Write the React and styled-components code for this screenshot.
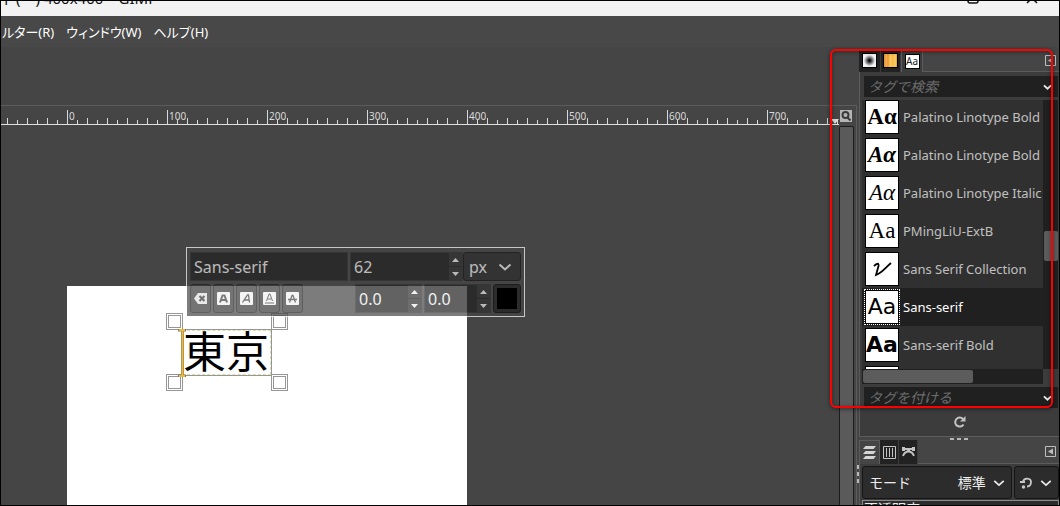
import React from 'react';
import styled, { createGlobalStyle, css } from 'styled-components';

const Global = createGlobalStyle`
  *, *::before, *::after { box-sizing: border-box; }
  body { margin: 0; background: #454545; }
  button, input, select {
    font: inherit; color: inherit; margin: 0; padding: 0; border: 0;
    background: none; border-radius: 0; appearance: none; outline: none; min-width: 0;
  }
  button { display: flex; align-items: center; justify-content: center; }
  svg { display: block; flex: none; }
`;

const Window = styled.div`
  position: relative;
  display: flex;
  flex-direction: column;
  height: 100vh;
  overflow: hidden;
  border: 1px solid #000;
  background: #454545;
  color: #bebebe;
  font: 14px/20px "Noto Sans", "Noto Sans CJK JP", sans-serif;
`;

const TitleBar = styled.header`
  display: flex;
  justify-content: space-between;
  align-items: flex-end;
  height: 15px;
  padding: 0 21px 8px 0;
  overflow: hidden;
  flex: none;
  background: #f3f2f3;
  color: #111;
  font-size: 15px;
`;
const TitleText = styled.span`white-space: pre;`;
const TitleButtons = styled.div`display: flex; gap: 47px; padding-bottom: 4px;`;

const MenuBar = styled.nav`
  display: flex;
  align-items: center;
  gap: 12px;
  height: 31px;
  padding-left: 1px;
  flex: none;
  background: #484848;
  color: #fff;
`;
const MenuItem = styled.button`
  white-space: nowrap;
  font-size: 13px;
  font-feature-settings: "palt";
`;

const Main = styled.main`
  display: flex;
  flex: 1;
  min-height: 0;
`;

const Editor = styled.section`
  display: flex;
  flex-direction: column;
  flex: 1;
  min-width: 0;
  padding-top: 58px;
`;
const EditorFrame = styled.div`
  display: grid;
  grid-template-columns: minmax(0, 1fr) 15px;
  grid-template-rows: 19px minmax(0, 1fr);
  flex: 1;
  min-height: 0;
  padding-right: 2px;
  border-top: 1px solid #5c5c5c;
  border-right: 1px solid #5c5c5c;
`;

const Ruler = styled.div`
  position: relative;
  display: flex;
  padding-left: 68px;
  overflow: hidden;
  border-bottom: 1px solid #e0e0e0;
  background:
    repeating-linear-gradient(90deg, transparent 0 66px, #d8d8d8 66px 67px, transparent 67px 100px) 0 100% / 100% 14px no-repeat,
    repeating-linear-gradient(90deg, transparent 0 6px, #d8d8d8 6px 7px, transparent 7px 20px) 0 100% / 100% 6px no-repeat,
    repeating-linear-gradient(90deg, transparent 0 6px, #d8d8d8 6px 7px, transparent 7px 10px) 0 100% / 100% 4px no-repeat;
`;
const RulerLabel = styled.span`
  width: 100px;
  flex: none;
  font-size: 10px;
  line-height: 20px;
  color: #dadada;
`;
const RulerMarker = styled.svg`
  position: absolute;
  right: 0;
  bottom: 0;
`;
const ZoomButton = styled.button`
  width: 12px;
  height: 12px;
  margin: 4px 0 0 1px;
  background: #b5b5b5;
`;
const VScroll = styled.div`
  margin-top: 1px;
  border: 1px solid #1c1c1c;
  border-bottom: 0;
  border-radius: 2px 2px 0 0;
  background: #5a5a5a;
`;

const Canvas = styled.div`
  position: relative;
  overflow: hidden;
  background: #454545;
`;
const Page = styled.div`
  position: absolute;
  left: 66px;
  top: 161px;
  width: 400px;
  height: 400px;
  background: #fff;
`;
const TextLayer = styled.div`
  position: absolute;
  left: 180px;
  top: 204px;
  width: 91px;
  height: 47px;
  padding-left: 1px;
  border: 1px solid #969696;
  color: #000;
  font: 43px/38px "Noto Sans CJK JP", sans-serif;
  white-space: nowrap;
  &::before {
    content: '';
    position: absolute;
    inset: 0;
    border: 1px dashed #dcdca8;
  }
`;
const Caret = styled.svg`
  position: absolute;
  left: -4px;
  top: -1px;
`;
const Handle = styled.i`
  position: absolute;
  width: 17px;
  height: 17px;
  border: 1px solid #969696;
  background: #fff;
  &::after {
    content: '';
    position: absolute;
    inset: 1px;
    border: 1px solid #969696;
  }
  ${p => (p.$x === 'l' ? 'left: -16px;' : 'right: -17px;')}
  ${p => (p.$y === 't' ? 'top: -17px;' : 'bottom: -16px;')}
`;

const PopupLayer = styled.form`
  position: absolute;
  left: 185px;
  top: 122px;
  display: grid;
  width: 339px;
  & > * { grid-area: 1 / 1; }
`;
const TextPopup = styled.div`
  display: flex;
  flex-direction: column;
  gap: 3px;
  padding: 4px 3px 3px;
  border: 1px solid #fff;
  background: #454545;
  opacity: 0.7;
  color: #ececec;
  font-size: 16px;
`;
const PopupRow = styled.div`
  display: flex;
  gap: 2px;
  height: 29px;
`;
const Entry = styled.input`
  width: 158px;
  flex: none;
  padding: 0 3px;
  border: 1px solid #303030;
  background: #212121;
`;
const Spin = styled.div`
  display: flex;
  width: ${p => p.$w}px;
  flex: none;
  border: 1px solid #303030;
  background: #212121;
  & > input { flex: 1; width: 0; padding: 0 3px; }
`;
const Steps = styled.div`
  display: grid;
  grid-template-rows: 1fr 1fr;
  gap: 1px;
  width: 13px;
  button { background: #303030; }
`;
const SizeGroup = styled.div`display: flex; flex: 1;`;
const FormatButtons = styled.div`
  display: flex;
  gap: 2px;
  margin-right: 50px;
`;
const SquareButton = styled.button`
  width: 21px;
  height: 29px;
  border: 1px solid #1c1c1c;
  border-radius: 3px;
  background: #3a3a3a;
`;
const ColorButton = styled.button`
  z-index: 1;
  place-self: end;
  width: 28px;
  height: 29px;
  margin: 0 4px 4px 0;
  border: 1px solid #1c1c1c;
  border-radius: 3px;
  background: #2c2c2c;
  i { width: 20px; height: 21px; background: #000; }
`;
const SelectBox = styled.label`
  display: flex;
  align-items: center;
  justify-content: space-between;
  flex: ${p => p.$grow || 'none'};
  width: ${p => (p.$w ? p.$w + 'px' : 'auto')};
  min-width: 0;
  padding: ${p => p.$pad || '0 8px 0 5px'};
  border: 1px solid #151515;
  border-radius: 3px;
  background: #2c2c2c;
  select { flex: 1; text-align-last: ${p => p.$align || 'left'}; }
`;

const Dock = styled.aside`
  display: flex;
  flex-direction: column;
  width: 202px;
  flex: none;
  padding: 2px 0 0 2px;
`;
const Tabs = styled.div`
  display: flex;
  height: ${p => p.$h}px;
  flex: none;
  margin-bottom: -1px;
`;
const Tab = styled.button`
  position: relative;
  width: ${p => p.$w || 20}px;
  height: 100%;
  border-right: 1px solid #3c3c3c;
  background: #222;
  ${p => p.$on && css`
    border: 1px solid #5c5c5c;
    border-bottom: 0;
    background: ${p.$bg || '#3c3c3c'};
  `}
`;
const TabMenu = styled.button`
  width: 11px;
  height: 11px;
  margin: 6px 3px 0 auto;
`;
const Swatch = styled.i`
  display: block;
  width: 15px;
  height: 15px;
  border: 1px solid #000;
  ${p => p.$kind === 'brush' && 'background: radial-gradient(circle, #000 0 5%, #555 25%, #f4f4f4 62%);'}
  ${p => p.$kind === 'wood' && 'background: linear-gradient(90deg, #e0903a, #f6b04a 20%, #e8943a 30%, #ffcc60 48%, #f8b848 70%, #ffd068 85%, #e89c40);'}
  ${p => p.$kind === 'font' && 'background: #fff; color: #222; font: 10px/13px "Noto Sans", sans-serif; text-align: center;'}
`;
const FontPanel = styled.div`
  display: flex;
  flex-direction: column;
  flex: none;
  height: 366px;
  padding: 4px 1px 0 2px;
  border: 1px solid #5c5c5c;
  border-right: 0;
  background: #3c3c3c;
`;
const TagBox = styled.label`
  display: flex;
  align-items: center;
  flex: none;
  height: 21px;
  margin-left: 2px;
  padding: 0 6px 0 4px;
  background: #202020;
  color: #e8e8e8;
  input {
    flex: 1;
    font-size: 14px;
    font-style: italic;
    &::placeholder { color: #6c6c6c; opacity: 1; }
  }
`;
const ListArea = styled.div`
  display: flex;
  height: 269px;
  flex: none;
  margin-top: 3px;
  background: #202020;
`;
const FontList = styled.ul`
  flex: 1;
  min-width: 0;
  margin: 0;
  padding: 0;
  overflow: hidden;
  list-style: none;
  background: #303030;
`;
const FontRow = styled.li`
  display: flex;
  align-items: center;
  gap: 4px;
  height: 38px;
  padding-left: 3px;
  white-space: nowrap;
  font-size: 13px;
  color: #c0c0c0;
  &:first-child { margin-top: -2px; }
  ${p => p.$on && 'background: #202020; color: #fff;'}
`;
const Preview = styled.span`
  display: flex;
  align-items: center;
  justify-content: center;
  width: 34px;
  height: 34px;
  flex: none;
  overflow: hidden;
  border: 1px solid #000;
  background: #fff;
  color: #000;
  font-family: ${p => p.$font};
  font-size: ${p => p.$size || 23}px;
  font-weight: ${p => p.$weight || 400};
  font-style: ${p => p.$style || 'normal'};
  outline: ${p => (p.$on ? '1px dotted #fff' : '0')};
`;
const ScrollTrackV = styled.div`
  width: 15px;
  flex: none;
  padding: 131px 0 0 1px;
  i { display: block; height: 30px; border-radius: 2px; background: #5c5c5c; }
`;
const ScrollTrackH = styled.div`
  height: 15px;
  flex: none;
  margin: 0 15px 3px 0;
  padding: 1px 70px 1px 1px;
  background: #202020;
  i { display: block; height: 13px; border-radius: 2px; background: #5c5c5c; }
`;
const Refresh = styled.button`
  flex: 1;
  width: 100%;
`;
const Grip = styled.div`
  display: flex;
  justify-content: center;
  align-items: center;
  gap: 3px;
  flex: none;
  height: 3px;
  i { width: 4px; height: 2px; background: #b8b8b8; }
`;
const SideGrip = styled.div`
  position: absolute;
  right: 200px;
  top: 464px;
  display: grid;
  gap: 3px;
  i { width: 2px; height: 4px; background: #b8b8b8; }
`;
const LayerPanel = styled.div`
  flex: 1;
  min-height: 0;
  padding: 2px 0 0 2px;
  border: 1px solid #5c5c5c;
  border-right: 0;
  background: #3c3c3c;
  color: #ececec;
`;
const ModeRow = styled.div`
  display: flex;
  gap: 2px;
  height: 33px;
`;
const Opacity = styled.label`
  display: flex;
  height: 24px;
  margin-top: 1px;
  padding-left: 1px;
  border: 1px solid #8a8a8a;
  background: #2c2c2c;
  line-height: 16px;
`;
const Callout = styled.div`
  position: absolute;
  top: 48px;
  right: 6px;
  width: 223px;
  height: 359px;
  border: 2px solid #f00;
  border-radius: 6px;
  box-shadow: 0 1px 4px rgba(0, 0, 0, 0.5), inset 0 1px 4px rgba(0, 0, 0, 0.4);
  pointer-events: none;
`;

const Chevron = ({ w = 14, h = 8, s = 2 }) => (
  <svg width={w} height={h} viewBox="0 0 14 8" fill="none" stroke="currentColor" strokeWidth={s}>
    <path d="M1.5 1.5 7 6.5l5.5-5" />
  </svg>
);
const Arrow = ({ down }) => (
  <svg width="7" height="4" viewBox="0 0 7 4" fill="currentColor">
    <path d={down ? 'M0 0h7L3.5 4z' : 'M0 4h7L3.5 0z'} />
  </svg>
);
const Stepper = ({ name }) => (
  <Steps>
    <button type="button" aria-label={`${name} +`}><Arrow /></button>
    <button type="button" aria-label={`${name} -`}><Arrow down /></button>
  </Steps>
);
const MenuArrow = () => (
  <TabMenu aria-label="タブメニュー">
    <svg width="11" height="11" viewBox="0 0 11 11">
      <path d="M.5.5h10v10H.5z" fill="none" stroke="#bebebe" />
      <path d="M8 2.5v6L3 5.5z" fill="#bebebe" />
    </svg>
  </TabMenu>
);
const LetterIcon = ({ children }) => (
  <svg width="13" height="13" viewBox="0 0 13 13">
    <rect width="13" height="13" rx="1" fill="#f0f0f0" />
    <g fill="none" stroke="#444">{children}</g>
  </svg>
);

const fonts = [
  { name: 'Palatino Linotype Bold', text: 'Aα', font: '"Liberation Serif", serif', weight: 700 },
  { name: 'Palatino Linotype Bold', text: 'Aα', font: '"Liberation Serif", serif', weight: 700, style: 'italic' },
  { name: 'Palatino Linotype Italic', text: 'Aα', font: '"Liberation Serif", serif', style: 'italic' },
  { name: 'PMingLiU-ExtB', text: 'Aa', font: '"Liberation Serif", serif' },
  { name: 'Sans Serif Collection', draw: true },
  { name: 'Sans-serif', text: 'Aa', font: '"DejaVu Sans", sans-serif', size: 22, on: true },
  { name: 'Sans-serif Bold', text: 'Aa', font: '"DejaVu Sans", sans-serif', weight: 700, size: 22 },
  { name: '', text: '', font: 'sans-serif' },
];

export default function App() {
  return (
    <Window>
      <Global />
      <TitleBar>
        <TitleText>ド(ー) 400x400 – GIMP</TitleText>
        <TitleButtons>
          <svg width="12" height="12" viewBox="0 0 12 12" fill="none" stroke="#111" strokeWidth="1.5"><rect x="1" y="1" width="10" height="10" rx="2" /></svg>
          <svg width="12" height="12" viewBox="0 0 12 12" stroke="#111" strokeWidth="1.5"><path d="m1 1 10 10M11 1 1 11" /></svg>
        </TitleButtons>
      </TitleBar>
      <MenuBar>
        <MenuItem>ルター(R)</MenuItem>
        <MenuItem>ウィンドウ(W)</MenuItem>
        <MenuItem>ヘルプ(H)</MenuItem>
      </MenuBar>
      <Main>
        <Editor>
          <EditorFrame>
            <Ruler>
              {[0, 100, 200, 300, 400, 500, 600, 700].map(n => <RulerLabel key={n}>{n}</RulerLabel>)}
              <RulerMarker width="8" height="5" viewBox="0 0 8 5"><path d="M0 0h8L4 5z" fill="#d8d8d8" /></RulerMarker>
            </Ruler>
            <ZoomButton aria-label="ズーム">
              <svg width="12" height="12" viewBox="0 0 12 12" fill="none" stroke="#3c3c3c" strokeWidth="2"><circle cx="5.5" cy="5" r="3" /><path d="m7.5 7.5 3 3" /></svg>
            </ZoomButton>
            <Canvas>
              <Page />
              <TextLayer>
                東京
                <Handle $x="l" $y="t" /><Handle $x="r" $y="t" />
                <Handle $x="l" $y="b" /><Handle $x="r" $y="b" />
                <Caret width="8" height="48" viewBox="0 0 8 48" fill="none">
                  <path d="M0 1h8M0 47h8M4.5 1v46" stroke="#777" strokeWidth="3" />
                  <path d="M1 1h6M1 47h6M4.5 1v46" stroke="#f0b830" strokeWidth="2" />
                </Caret>
              </TextLayer>
              <PopupLayer>
                <TextPopup>
                  <PopupRow>
                    <Entry aria-label="フォント" defaultValue="Sans-serif" />
                    <SizeGroup>
                      <Spin $w={113}>
                        <input aria-label="サイズ" defaultValue="62" />
                        <Stepper name="サイズ" />
                      </Spin>
                      <SelectBox $grow="1">
                        <select aria-label="単位"><option>px</option></select>
                        <Chevron />
                      </SelectBox>
                    </SizeGroup>
                  </PopupRow>
                  <PopupRow>
                    <FormatButtons>
                      <SquareButton type="button" aria-label="消去">
                        <svg width="13" height="11" viewBox="0 0 13 11"><path d="M4 0h9v11H4L0 5.5z" fill="#e0e0e0" /><path d="m5.5 3 5 5m0-5-5 5" stroke="#333" strokeWidth="2" /></svg>
                      </SquareButton>
                      <SquareButton type="button" aria-label="太字"><LetterIcon><path d="m3 10.5 2.5-7h2l2.5 7M4 8h5" strokeWidth="2" /></LetterIcon></SquareButton>
                      <SquareButton type="button" aria-label="斜体"><LetterIcon><path d="M2.5 10.5 7.5 3h1l1 7.5M4.5 8h4.5" strokeWidth="1.3" /></LetterIcon></SquareButton>
                      <SquareButton type="button" aria-label="下線"><LetterIcon><path d="m3.5 9 2.5-7h1l2.5 7M5 7h3M2 11h9" /></LetterIcon></SquareButton>
                      <SquareButton type="button" aria-label="取り消し線"><LetterIcon><path d="m3.5 10.5 2.5-7h1l2.5 7M2 7.5h9" strokeWidth="1.3" /></LetterIcon></SquareButton>
                    </FormatButtons>
                    <Spin $w={67}>
                      <input aria-label="ベースライン" defaultValue="0.0" />
                      <Stepper name="ベースライン" />
                    </Spin>
                    <Spin $w={67}>
                      <input aria-label="カーニング" defaultValue="0.0" />
                      <Stepper name="カーニング" />
                    </Spin>
                  </PopupRow>
                </TextPopup>
                <ColorButton type="button" aria-label="文字色"><i /></ColorButton>
              </PopupLayer>
            </Canvas>
            <VScroll />
          </EditorFrame>
        </Editor>
        <Dock>
          <Tabs $h={23}>
            <Tab aria-label="ブラシ" $w={22}><Swatch $kind="brush" /></Tab>
            <Tab aria-label="パターン"><Swatch $kind="wood" /></Tab>
            <Tab aria-label="フォント" $w={22} $on><Swatch $kind="font">Aa</Swatch></Tab>
            <MenuArrow />
          </Tabs>
          <FontPanel>
            <TagBox>
              <input aria-label="タグで検索" placeholder="タグで検索" />
              <Chevron w={9} h={6} s={3} />
            </TagBox>
            <ListArea>
              <FontList>
                {fonts.map((f, i) => (
                  <FontRow key={i} $on={f.on}>
                    <Preview $font={f.font} $size={f.size} $weight={f.weight} $style={f.style} $on={f.on}>
                      {f.draw ? (
                        <svg width="20" height="16" viewBox="0 0 20 16" fill="none" stroke="#000" strokeWidth="1.8"><path d="M2 5C5 2 7 2 6.500 5L4 14C10 12 13 7 19 2" /></svg>
                      ) : f.text}
                    </Preview>
                    {f.name}
                  </FontRow>
                ))}
              </FontList>
              <ScrollTrackV><i /></ScrollTrackV>
            </ListArea>
            <ScrollTrackH><i /></ScrollTrackH>
            <TagBox>
              <input aria-label="タグを付ける" placeholder="タグを付ける" />
              <Chevron w={9} h={6} s={3} />
            </TagBox>
            <Refresh aria-label="更新">
              <svg width="12" height="12" viewBox="0 0 12 12"><path d="M9.5 8.5A4.5 4.5 0 1 1 9 3" fill="none" stroke="#c4c4c4" strokeWidth="2" /><path d="M11.5 0v5.5H6z" fill="#c4c4c4" /></svg>
            </Refresh>
          </FontPanel>
          <Grip><i /><i /><i /></Grip>
          <Tabs $h={24}>
            <Tab aria-label="レイヤー" $w={21} $on $bg="#454545">
              <svg width="13" height="13" viewBox="0 0 13 13" fill="#d4d4d4"><path d="M2.5 0H13l-2.500 3H0zM2.5 5H13l-2.500 3H0zM2.5 10H13l-2.500 3H0z" /></svg>
            </Tab>
            <Tab aria-label="チャンネル" $w={19}>
              <svg width="13" height="13" viewBox="0 0 13 13" fill="none" stroke="#c4c4c4"><path d="M.5.5h12v12H.5zM3.5 2v9M6.5 2v9M9.5 2v9" /></svg>
            </Tab>
            <Tab aria-label="パス" $w={19}>
              <svg width="13" height="10" viewBox="0 0 13 10" fill="none" stroke="#c4c4c4"><path d="M1 2h11" strokeWidth="2" /><path d="M1 9c1.500-4 4-4.500 5.500-4.500S10.500 5 12 9" strokeWidth="1.8" /><path d="M0 0h3v4H0zM5 1h3v4H5zM10 0h3v4h-3z" fill="#c4c4c4" stroke="none" /></svg>
            </Tab>
            <MenuArrow />
          </Tabs>
          <LayerPanel>
            <ModeRow>
              <SelectBox $grow="1" $pad="0 6px 0 6px" $align="right">
                <span>モード</span>
                <select aria-label="モード"><option>標準</option></select>
                &nbsp;&nbsp;<Chevron w={12} />
              </SelectBox>
              <SelectBox as="button" $w={45} $pad="0 6px 0 5px" aria-label="モード切替">
                <svg width="12" height="12" viewBox="0 0 12 12" fill="none" stroke="#c8c8c8" strokeWidth="1.8"><path d="M0 5h5M3 5c1-5 8-4 8 0 0 3-2 4.500-4 4.500" /><circle cx="3.500" cy="10" r=".8" /></svg>
                <Chevron w={12} />
              </SelectBox>
            </ModeRow>
            <Opacity>不透明度</Opacity>
          </LayerPanel>
        </Dock>
      </Main>
      <SideGrip><i /><i /><i /></SideGrip>
      <Callout />
    </Window>
  );
}
